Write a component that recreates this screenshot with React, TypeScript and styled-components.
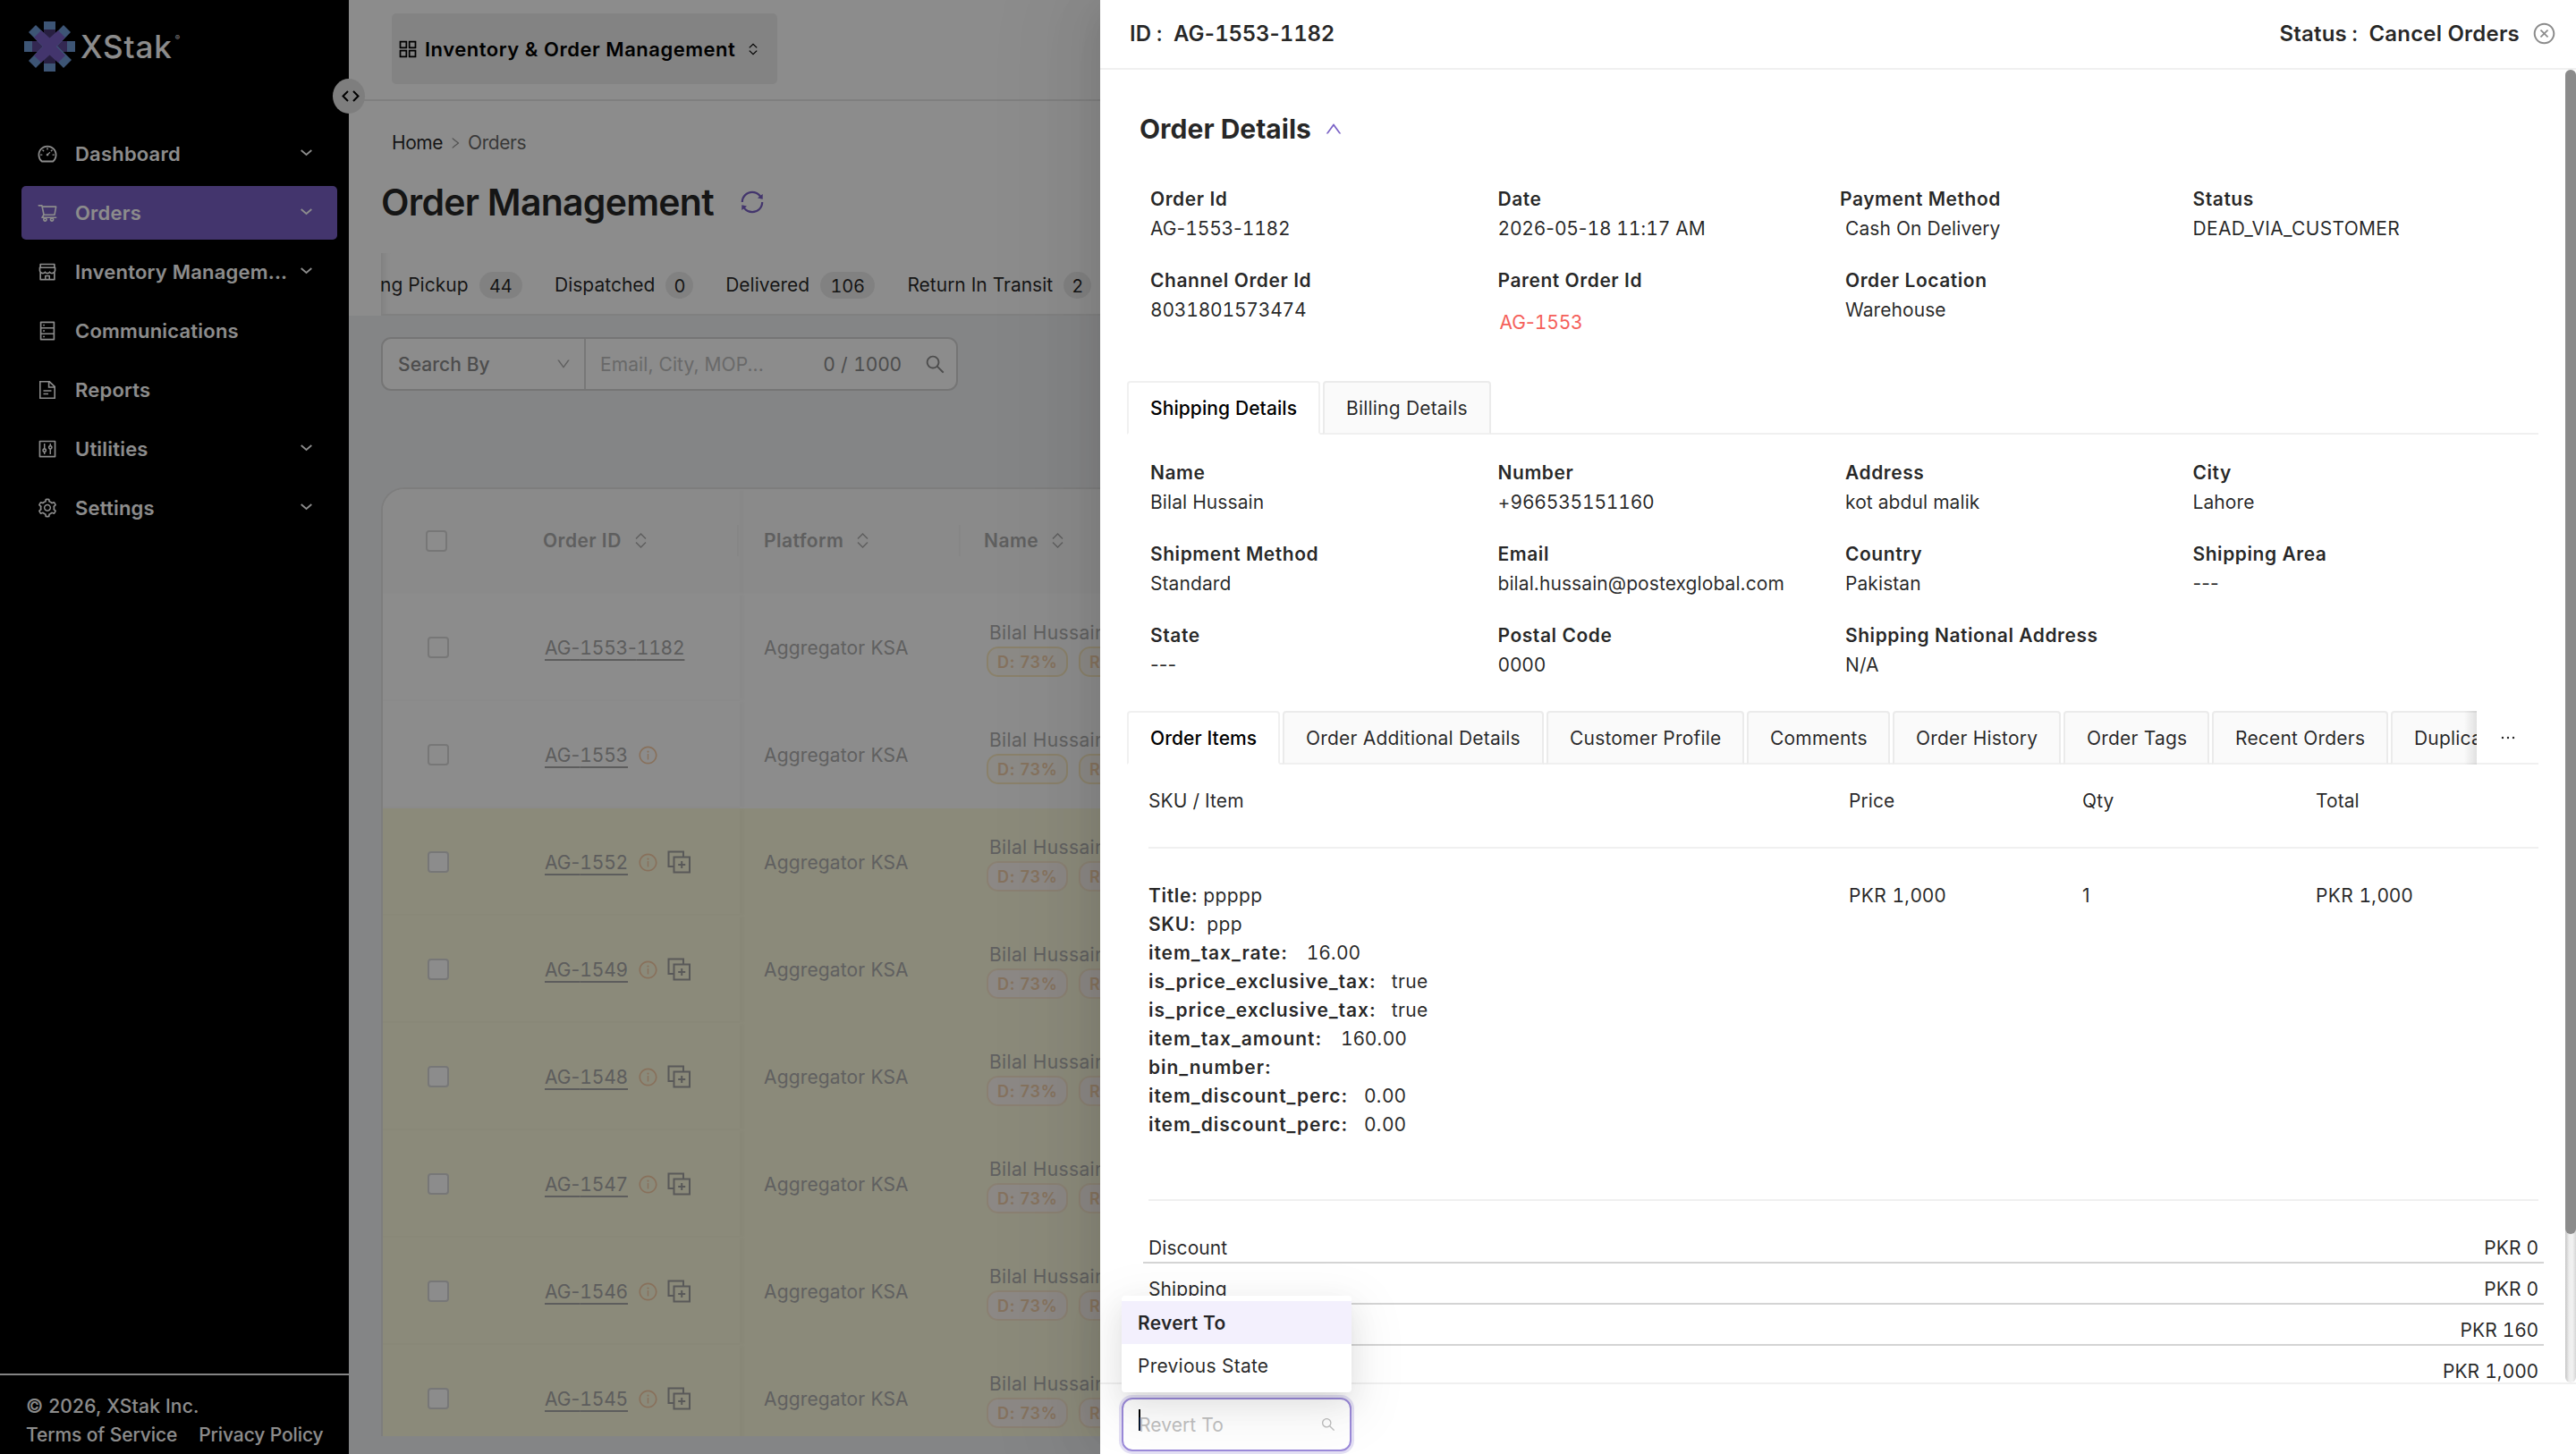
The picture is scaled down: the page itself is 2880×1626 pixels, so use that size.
import * as React from 'react'
import styled, { createGlobalStyle, css } from 'styled-components'
import {
  AiOutlineAppstore,
  AiOutlineCloseCircle,
  AiOutlineControl,
  AiOutlineDashboard,
  AiOutlineDatabase,
  AiOutlineDown,
  AiOutlineEllipsis,
  AiOutlineInfoCircle,
  AiOutlineRight,
  AiOutlineSearch,
  AiOutlineSetting,
  AiOutlineShop,
  AiOutlineShoppingCart,
  AiOutlineSync,
  AiOutlineUp,
} from 'react-icons/ai'

// Config
const colors = {
  primary: '#7a62c6',
  text: 'rgba(0, 0, 0, 0.85)',
  border: '#f0f0f0',
  page: '#f0f2f5',
}

const GlobalStyle = createGlobalStyle`
  * {
    box-sizing: border-box;
  }

  body {
    margin: 0;
    font-family: 'Inter', 'Liberation Sans', sans-serif;
    font-size: 21px;
    letter-spacing: 0.08px;
    color: ${colors.text};
  }

  p, h1, h2 {
    margin: 0;
  }

  svg {
    display: block;
    flex: none;
  }
`

const Page = styled.div`
  position: relative;
  display: grid;
  grid-template-columns: 390px 1fr;
  width: 2880px;
  height: 1626px;
  overflow: hidden;
  background-color: ${colors.page};
`

// Digits share one width, punctuation between them stays proportional
const Digits = styled.span`
  font-variant-numeric: tabular-nums;
  letter-spacing: -0.2px;
`

/* Sidebar */

const Sidebar = styled.aside`
  position: relative;
  display: flex;
  flex-direction: column;
  background-color: #000;
  color: #fff;
`

const Brand = styled.div`
  display: flex;
  gap: 6px;
  height: 142px;
  padding: 24px 0 0 27px;
`

const BrandName = styled.span`
  font-size: 35px;
  font-weight: 500;
  line-height: 56px;
  letter-spacing: 0.9px;
`

const BrandMark = styled.sup`
  margin: 14px 0 0 -3px;
  font-size: 8px;
  line-height: 8px;
`

const Collapse = styled.button`
  position: absolute;
  top: 88px;
  right: -18px;
  z-index: 2;
  display: grid;
  place-items: center;
  width: 36px;
  height: 39px;
  padding: 0 0 0 4px;
  border: 0;
  border-radius: 50%;
  background-color: #e6e6e6;
`

const Nav = styled.nav`
  display: grid;
  gap: 6px;
  padding: 0 13px 0 24px;
`

const NavItem = styled.a<{ $active?: boolean }>`
  display: grid;
  grid-template-columns: 43px 1fr 14px;
  align-items: center;
  height: 60px;
  padding: 0 27px 0 17px;
  border-radius: 5px;
  background-color: ${({ $active }) => ($active ? colors.primary : 'transparent')};
  font-size: 22px;
  font-weight: 600;
  letter-spacing: 0.2px;
  white-space: nowrap;

  svg:last-child {
    margin-top: -2px;
  }
`

const Legal = styled.footer`
  display: grid;
  grid-template-columns: max-content max-content;
  column-gap: 24px;
  align-content: start;
  height: 90px;
  margin-top: auto;
  padding: 19px 29px 0;
  border-top: 2px solid #f0f0f0;
  font-weight: 500;
  letter-spacing: -0.1px;
  line-height: 32px;

  p {
    grid-column: 1 / -1;
    letter-spacing: 0.2px;
  }
`

/* Main */

const Main = styled.main`
  display: flex;
  flex-direction: column;
  min-width: 0;
`

const TopBar = styled.header`
  height: 113px;
  padding: 15px 0 0 48px;
  border-bottom: 2px solid #e8e8e8;
  background-color: #fff;
`

const AppSwitcher = styled.div`
  display: flex;
  align-items: center;
  width: 431px;
  height: 79px;
  padding-left: 5px;
  border-radius: 5px;
  background-color: #efefef;
  color: #000;
  font-size: 22px;
  font-weight: 600;
  letter-spacing: 0.52px;

  span {
    margin: 0 15px 0 6px;
  }
`

const PageHead = styled.div`
  height: 240px;
  padding: 32px 0 0 36px;
  background-color: #fff;
`

const Breadcrumb = styled.div`
  display: flex;
  align-items: center;
  gap: 6px;
  padding-left: 12px;
  letter-spacing: -0.45px;
  line-height: 30px;

  span:last-child {
    color: rgba(0, 0, 0, 0.62);
  }
`

const PageTitle = styled.div`
  display: flex;
  align-items: center;
  gap: 28px;
  height: 60px;
  margin-top: 21px;
  color: ${colors.primary};

  h1 {
    color: ${colors.text};
    font-size: 41px;
    font-weight: 600;
    letter-spacing: -0.75px;
  }
`

const StatusTabs = styled.div`
  display: flex;
  align-items: center;
  gap: 36px;
  height: 70px;
  margin-top: 27px;
  padding-top: 2px;
  border-bottom: 2px solid #e9e9e9;
  box-shadow: inset 12px 0 10px -10px rgba(0, 0, 0, 0.12);
  letter-spacing: 0;
  overflow: hidden;
  white-space: nowrap;
`

const StatusTab = styled.div`
  display: flex;
  align-items: center;
  gap: 12px;

  &:first-child {
    margin-left: -1px;
  }
`

const Count = styled.span<{ $single?: boolean }>`
  height: 30px;
  margin-top: 2px;
  padding: 0 ${({ $single }) => ($single ? 9 : 11.5)}px;
  border-radius: 15px;
  background-color: #ececec;
  font-size: 20px;
  line-height: 32px;
`

const SearchBar = styled.div`
  display: grid;
  grid-template-columns: 225px 1fr;
  width: 645px;
  height: 60px;
  margin: 24px 0 0 36px;
  border: 2px solid #d6d6d6;
  border-radius: 11px;
  background-color: #fff;
  color: #8c8c8c;
`

const SearchField = styled.div`
  display: flex;
  align-items: center;
  justify-content: space-between;
  padding: 0 14px 0 17px;
  font-weight: 500;

  &:last-child {
    padding: 0 11px 0 16px;
    border-left: 2px solid #dadada;
    font-weight: 400;
  }
`

const Placeholder = styled.span`
  flex: 1;
  color: #bfbfbf;
`

const Counter = styled.span`
  margin-right: 25px;
  letter-spacing: 0.4px;
`

const Card = styled.section`
  flex: none;
  height: 1061px;
  margin: 108px 0 0 36px;
  border: 2px solid #e4e4e4;
  border-width: 2px 0 0 2px;
  border-top-left-radius: 26px;
  background-color: #fff;
  overflow: hidden;
`

const rowGrid = css`
  display: grid;
  grid-template-columns: 399px 247px 1fr;
`

const HeadRow = styled.div`
  ${rowGrid}
  height: 117px;
  background-color: #fcfcfc;
  color: #aeaeae;
  font-weight: 600;
  letter-spacing: 0.45px;
`

const Row = styled.div<{ $marked?: boolean }>`
  ${rowGrid}
  height: 120px;
  background-color: ${({ $marked }) => ($marked ? '#fdfbde' : '#fff')};
  color: #b0b0b0;
`

const IdCell = styled.div<{ $head?: boolean }>`
  display: grid;
  grid-template-columns: 131px 1fr;
  align-items: center;
  padding: ${({ $head }) => ($head ? '0 1px 2px 48px' : '2px 1px 0 50px')};
  border-bottom: ${({ $head }) => ($head ? 0 : 2)}px solid rgba(0, 0, 0, 0.012);
  box-shadow: 6px 0 2px -1px rgba(0, 0, 0, 0.018);
`

const Cell = styled.div`
  display: flex;
  align-items: center;
  padding-left: 27px;
  letter-spacing: 0.15px;
`

const HeadCell = styled.div<{ $divider?: boolean }>`
  display: flex;
  align-items: center;
  align-self: center;
  gap: 15px;
  height: 35px;
  margin-bottom: 2px;
  padding-left: ${({ $divider }) => ($divider ? 27 : 26)}px;
  border-right: ${({ $divider }) => ($divider ? 2 : 0)}px solid #f4f4f4;
`

const IdHead = styled(HeadCell)`
  margin-bottom: 0;
  padding-left: 0;
  border-right: 2px solid #f4f4f4;
`

const Checkbox = styled.span`
  width: 24px;
  height: 24px;
  border: 2px solid #d9d9d9;
  border-radius: 4px;
  background-color: #fff;
`

const OrderLink = styled.div`
  display: flex;
  align-items: center;

  svg:nth-of-type(1) {
    margin-left: 11px;
    color: #f7cda6;
  }

  svg:nth-of-type(2) {
    margin-left: 10px;
    color: #a2a2a2;
  }
`

const OrderId = styled.a`
  margin-top: 1px;
  color: #aaa;
  text-decoration: underline;
  text-decoration-thickness: 2px;
  text-underline-offset: 5px;
`

const Customer = styled.div`
  padding: 28px 0 0 32px;
  letter-spacing: 0.35px;
  line-height: 32px;
  white-space: nowrap;
`

const Scores = styled.div`
  display: flex;
  gap: 12px;
  margin: -1px 0 0 -3px;
`

const Score = styled.span<{ $marked?: boolean }>`
  width: 91px;
  height: 34px;
  border: 2px solid ${({ $marked }) => ($marked ? '#fbead0' : '#fcecc4')};
  border-radius: 13px;
  background-color: ${({ $marked }) => ($marked ? '#fff8f2' : '#fffcf4')};
  color: #f2d0ac;
  font-size: 18px;
  font-weight: 600;
  letter-spacing: 0.8px;
  line-height: 31px;
  text-indent: 10px;
`

const Mask = styled.div`
  position: absolute;
  inset: 0;
  z-index: 5;
  background-color: rgba(0, 0, 0, 0.45);
`

/* Drawer */

const Drawer = styled.section`
  position: absolute;
  top: 0;
  right: 0;
  bottom: 0;
  z-index: 10;
  display: grid;
  grid-template-rows: 78px 1468px 80px;
  width: 1650px;
  background-color: #fff;
  box-shadow: -12px 0 32px -16px rgba(0, 0, 0, 0.08), -18px 0 56px 0 rgba(0, 0, 0, 0.05),
    -24px 0 96px 32px rgba(0, 0, 0, 0.03);
`

const DrawerHeader = styled.header`
  display: flex;
  align-items: center;
  justify-content: space-between;
  padding: 0 22px 2px 33px;
  border-bottom: 2px solid ${colors.border};
  font-size: 24px;
  font-weight: 600;
  letter-spacing: 0.2px;
`

const HeaderPair = styled.div`
  display: flex;
  align-items: center;
  white-space: pre;

  i {
    margin: 0 12px 0 5px;
    font-style: normal;
    font-weight: 500;
  }

  svg {
    margin-left: 14px;
    color: #8c8c8c;
  }
`

const DrawerScroll = styled.div`
  display: grid;
  grid-template-columns: 1fr 12px;
  overflow: hidden;
`

const DrawerBody = styled.div`
  height: 1468px;
  padding: 46px 30px 0;
  overflow: hidden;
`

const ScrollTrack = styled.div`
  border-radius: 6px;
  background: linear-gradient(to right, #c6c6c6, #ececec 35%, #f2f2f2 65%, #d6d6d6);
`

const ScrollThumb = styled.div`
  height: 1302px;
  border-radius: 6px;
  background-color: #8b8b8b;
`

const SectionTitle = styled.div`
  display: flex;
  align-items: center;
  gap: 14px;
  height: 40px;
  padding-left: 14px;
  color: ${colors.primary};

  h2 {
    color: ${colors.text};
    font-size: 30px;
    font-weight: 700;
    letter-spacing: 0;
  }
`

const Fields = styled.div<{ $top: number; $height: number }>`
  display: grid;
  grid-template-columns: repeat(4, 388.5px);
  grid-auto-rows: 66px;
  row-gap: 25px;
  height: ${({ $height }) => $height}px;
  padding: ${({ $top }) => $top}px 0 0 26px;
`

const FieldBox = styled.div<{ $outdent?: boolean; $code?: boolean }>`
  letter-spacing: ${({ $code }) => ($code ? 0.3 : 0.08)}px;
  line-height: 33px;
  white-space: nowrap;

  b {
    display: block;
    margin-left: ${({ $outdent }) => ($outdent ? -6 : 0)}px;
    font-weight: 600;
    letter-spacing: 0.55px;
  }
`

const ParentLink = styled.a`
  display: block;
  margin: 14px 0 0 2px;
  color: #f5605a;
`

const TabBar = styled.div`
  display: grid;
  grid-template-columns: 1fr auto;
  width: 1578px;
  height: 60px;
  border-bottom: 2px solid ${colors.border};
`

const TabList = styled.div<{ $clipped?: boolean }>`
  position: relative;
  display: flex;
  gap: 3px;
  height: 60px;
  overflow: ${({ $clipped }) => ($clipped ? 'hidden' : 'visible')};

  &::after {
    content: '';
    display: ${({ $clipped }) => ($clipped ? 'block' : 'none')};
    position: absolute;
    top: 0;
    right: 0;
    width: 14px;
    height: 100%;
    background: linear-gradient(to right, rgba(0, 0, 0, 0), rgba(0, 0, 0, 0.1));
  }
`

const Tab = styled.div<{ $active?: boolean; $width: number }>`
  flex: none;
  width: ${({ $width }) => $width}px;
  height: 60px;
  border: 2px solid ${({ $active }) => ($active ? colors.border : '#ebebeb')};
  border-bottom-color: ${({ $active }) => ($active ? '#fff' : colors.border)};
  border-radius: 4px 4px 0 0;
  background-color: ${({ $active }) => ($active ? '#fff' : '#fafafa')};
  color: ${({ $active }) => ($active ? '#000' : colors.text)};
  font-weight: ${({ $active }) => ($active ? 500 : 400)};
  letter-spacing: ${({ $active }) => ($active ? 0.1 : 0.2)}px;
  line-height: 57px;
  text-indent: 24px;
  white-space: nowrap;
`

const MoreTabs = styled.div`
  display: grid;
  place-items: center;
  width: 69px;
`

const ItemsRow = styled.div<{ $head?: boolean }>`
  display: grid;
  grid-template-columns: 783px 261px 261px 1fr;
  height: ${({ $head }) => ($head ? 94 : 394)}px;
  width: 1554px;
  margin-left: 24px;
  padding-top: ${({ $head }) => ($head ? 25 : 37)}px;
  border-bottom: 2px solid ${colors.border};
  letter-spacing: ${({ $head }) => ($head ? 0.08 : 0.4)}px;
  line-height: 32px;
`

const Attribute = styled.p<{ $gap: number; $raw?: boolean }>`
  b {
    margin-right: ${({ $gap }) => $gap}px;
    font-weight: 600;
    letter-spacing: ${({ $raw }) => ($raw ? 0.95 : 0.65)}px;
  }
`

const Totals = styled.div`
  width: 1566px;
  margin: 24px 0 0 18px;
`

const TotalRow = styled.div`
  display: flex;
  justify-content: space-between;
  height: 46px;
  padding: 13px 6px 0;
  border-bottom: 2px solid #d4d4d4;
  line-height: 32px;

  span:last-child {
    margin-left: auto;
  }
`

const DrawerFooter = styled.footer`
  position: relative;
  padding: 15px 24px 0;
  border-top: 2px solid ${colors.border};
`

const Select = styled.div`
  display: flex;
  align-items: center;
  width: 257px;
  height: 60px;
  padding: 0 15px 0 17px;
  border: 2px solid #9b8ad9;
  border-radius: 12px;
  box-shadow: 0 0 0 3px rgba(122, 98, 198, 0.2);
  color: #bfbfbf;

  span {
    flex: 1;
    padding-top: 1px;
  }
`

const TextCursor = styled.i`
  width: 2px;
  height: 24px;
  margin: -11px -2px 0 0;
  background-color: #000;
`

const Dropdown = styled.div`
  position: absolute;
  bottom: 69px;
  left: 24px;
  width: 257px;
  height: 108px;
  padding: 6px 0;
  border-radius: 4px;
  background-color: #fff;
  box-shadow: 0 6px 12px -8px rgba(0, 0, 0, 0.12), 0 12px 32px 0 rgba(0, 0, 0, 0.08),
    0 18px 56px 16px rgba(0, 0, 0, 0.05);
`

const Option = styled.div<{ $selected?: boolean }>`
  height: 48px;
  padding-left: 18px;
  background-color: ${({ $selected }) => ($selected ? '#f3f0fd' : '#fff')};
  font-weight: ${({ $selected }) => ($selected ? 600 : 400)};
  letter-spacing: 0.25px;
  line-height: 49px;
`

/* Icons */

const Logo = () => (
  <svg width="57" height="56" viewBox="0 0 57 56">
    <path d="M22 0h13v56H22z" fill="#4a3a77" />
    <path d="M0 22h57v12H0z" fill="#5d4a96" />
    <path d="M22 0h13v9H22zM22 47h13v9H22zM0 22h9v12H0zM48 22h9v12h-9z" fill="#6f9cd6" />
    <path d="M5 12 13 4 53 43 44 52zM44 4l8 8L13 52l-8-8z" fill="#6f9cd6" />
    <path d="m11 18 8-8 9.500 8.500L38 10l8 8-10 10 10 10-8 8-9.500-8.500L19 46l-8-8 10-10z" fill="#7a62c6" />
  </svg>
)

const CollapseIcon = () => (
  <svg width="20" height="13" viewBox="0 0 20 13" fill="none" stroke="#000" strokeWidth="2">
    <path d="M7 1 1.500 6.500 7 12M13 1l5.500 5.500L13 12" />
  </svg>
)

const Chevron = () => (
  <svg width="13" height="8" viewBox="0 0 13 8" fill="none" stroke="currentColor" strokeWidth="1.800">
    <path d="m.7 1 5.800 5L12.300 1" />
  </svg>
)

const ReportIcon = () => (
  <svg width="24" height="24" viewBox="0 0 24 24" fill="none" stroke="currentColor" strokeWidth="1.600">
    <path d="M3.800 2.800h10.500l5.900 5.500v13H3.800zM13.600 3v6h6M7.500 13h9M7.500 16.500h5.500" />
  </svg>
)

const Sorter = ({ width = 13, height = 17 }: { width?: number; height?: number }) => (
  <svg width={width} height={height} viewBox="0 0 13 17" fill="none" stroke="currentColor" strokeWidth="1.500">
    <path d="m1 6.500 5.500-5.500L12 6.500M1 10.500 6.500 16 12 10.500" />
  </svg>
)

const CopyPlusIcon = () => (
  <svg width="26" height="26" viewBox="0 0 26 26" fill="none" stroke="currentColor" strokeWidth="2">
    <path d="M7 18H1.500V1.500H18V7M7.500 7.500H25v17H7.500zM16.200 12v8M12.200 16h8" />
  </svg>
)

const navItems = [
  { label: 'Dashboard', icon: AiOutlineDashboard, open: true },
  { label: 'Orders', icon: AiOutlineShoppingCart, open: true, active: true },
  { label: 'Inventory Managem...', icon: AiOutlineShop, open: true },
  { label: 'Communications', icon: AiOutlineDatabase },
  { label: 'Reports', icon: ReportIcon },
  { label: 'Utilities', icon: AiOutlineControl, open: true },
  { label: 'Settings', icon: AiOutlineSetting, open: true },
]

const statusTabs = [
  ['ng Pickup', '44'],
  ['Dispatched', '0'],
  ['Delivered', '106'],
  ['Return In Transit', '2'],
]

const orders = [
  { id: 'AG-1553-1182' },
  { id: 'AG-1553', info: true },
  { id: 'AG-1552', info: true, marked: true },
  { id: 'AG-1549', info: true, marked: true },
  { id: 'AG-1548', info: true, marked: true },
  { id: 'AG-1547', info: true, marked: true },
  { id: 'AG-1546', info: true, marked: true },
  { id: 'AG-1545', info: true, marked: true },
]

const shipping = [
  ['Name', 'Bilal Hussain'],
  ['Number', '+966535151160'],
  ['Address', 'kot abdul malik'],
  ['City', 'Lahore'],
  ['Shipment Method', 'Standard'],
  ['Email', 'bilal.hussain@postexglobal.com'],
  ['Country', 'Pakistan'],
  ['Shipping Area', '---'],
  ['State', '---'],
  ['Postal Code', '0000'],
  ['Shipping National Address', 'N/A'],
]

const itemTabs: [string, number][] = [
  ['Order Items', 171],
  ['Order Additional Details', 292],
  ['Customer Profile', 221],
  ['Comments', 160],
  ['Order History', 188],
  ['Order Tags', 163],
  ['Recent Orders', 197],
  ['Duplicate Orders', 220],
]

const attributes: [string, string, number][] = [
  ['Title:', 'ppppp', 6],
  ['SKU:', 'ppp', 12],
  ['item_tax_rate:', '16.00', 21],
  ['is_price_exclusive_tax:', 'true', 17],
  ['is_price_exclusive_tax:', 'true', 17],
  ['item_tax_amount:', '160.00', 21],
  ['bin_number:', '', 0],
  ['item_discount_perc:', '0.00', 18],
  ['item_discount_perc:', '0.00', 18],
]

const totals = [
  ['Discount', 'PKR 0'],
  ['Shipping', 'PKR 0'],
  ['', 'PKR 160'],
  ['', 'PKR 1,000'],
]

const Tabular = ({ text }: { text: string }) => (
  <>
    {text.split(/(\d+)/).map((part, i) => (i % 2 ? <Digits key={i}>{part}</Digits> : part))}
  </>
)

type FieldProps = {
  label: string
  value?: string
  outdent?: boolean
  code?: boolean
  children?: React.ReactNode
}

const Field = ({ label, value = '', outdent, code, children }: FieldProps) => (
  <FieldBox $outdent={outdent} $code={code}>
    <b>{label}</b>
    <Tabular text={value} />
    {children}
  </FieldBox>
)

const SideMenu = () => (
  <Sidebar>
    <Brand>
      <Logo />
      <BrandName>XStak</BrandName>
      <BrandMark>®</BrandMark>
    </Brand>
    <Collapse>
      <CollapseIcon />
    </Collapse>
    <Nav>
      {navItems.map(({ label, icon: Icon, open, active }) => (
        <NavItem key={label} $active={active}>
          <Icon size={24} />
          <span>{label}</span>
          {open && <Chevron />}
        </NavItem>
      ))}
    </Nav>
    <Legal>
      <p>© 2026, XStak Inc.</p>
      <span>Terms of Service</span>
      <span>Privacy Policy</span>
    </Legal>
  </Sidebar>
)

const OrdersTable = () => (
  <Card>
    <HeadRow>
      <IdCell $head>
        <Checkbox />
        <IdHead>
          Order ID <Sorter />
        </IdHead>
      </IdCell>
      <HeadCell $divider>
        Platform <Sorter />
      </HeadCell>
      <HeadCell>
        Name <Sorter />
      </HeadCell>
    </HeadRow>
    {orders.map(({ id, info, marked }) => (
      <Row key={id} $marked={marked}>
        <IdCell>
          <Checkbox />
          <OrderLink>
            <OrderId>
              <Tabular text={id} />
            </OrderId>
            {info && <AiOutlineInfoCircle size={23} />}
            {marked && <CopyPlusIcon />}
          </OrderLink>
        </IdCell>
        <Cell>Aggregator KSA</Cell>
        <Customer>
          Bilal Hussain
          <Scores>
            <Score $marked={marked}>D: 73%</Score>
            <Score $marked={marked}>R: 27%</Score>
          </Scores>
        </Customer>
      </Row>
    ))}
  </Card>
)

const OrderDrawer = () => (
  <Drawer>
    <DrawerHeader>
      <HeaderPair>
        ID<i>:</i>
        <span>
          <Tabular text="AG-1553-1182" />
        </span>
      </HeaderPair>
      <HeaderPair>
        Status<i>:</i>Cancel Orders
        <AiOutlineCloseCircle size={27} />
      </HeaderPair>
    </DrawerHeader>
    <DrawerScroll>
      <DrawerBody>
        <SectionTitle>
          <h2>Order Details</h2>
          <AiOutlineUp size={22} />
        </SectionTitle>
        <Fields $top={42} $height={262}>
          <Field label="Order Id" value="AG-1553-1182" />
          <Field label="Date" value="2026-05-18 11:17 AM" />
          <Field label="Payment Method" value="Cash On Delivery" outdent />
          <Field label="Status" value="DEAD_VIA_CUSTOMER" code />
          <Field label="Channel Order Id" value="8031801573474" />
          <Field label="Parent Order Id">
            <ParentLink>
              <Tabular text="AG-1553" />
            </ParentLink>
          </Field>
          <Field label="Order Location" value="Warehouse" />
        </Fields>

        <TabBar>
          <TabList>
            <Tab $active $width={216}>Shipping Details</Tab>
            <Tab $width={188}>Billing Details</Tab>
          </TabList>
        </TabBar>
        <Fields $top={26} $height={309}>
          {shipping.map(([label, value]) => (
            <Field key={label} label={label} value={value} />
          ))}
        </Fields>

        <TabBar>
          <TabList $clipped>
            {itemTabs.map(([label, width], i) => (
              <Tab key={label} $active={i === 0} $width={width}>{label}</Tab>
            ))}
          </TabList>
          <MoreTabs>
            <AiOutlineEllipsis size={22} />
          </MoreTabs>
        </TabBar>
        <ItemsRow $head>
          <span>SKU / Item</span>
          <span>Price</span>
          <span>Qty</span>
          <span>Total</span>
        </ItemsRow>
        <ItemsRow>
          <div>
            {attributes.map(([name, value, gap], i) => (
              <Attribute key={i} $gap={gap} $raw={name.includes('_')}>
                <b>{name}</b>
                <Tabular text={value} />
              </Attribute>
            ))}
          </div>
          <span><Tabular text="PKR 1,000" /></span>
          <span>1</span>
          <span><Tabular text="PKR 1,000" /></span>
        </ItemsRow>
        <Totals>
          {totals.map(([label, value], i) => (
            <TotalRow key={i}>
              {label && <span>{label}</span>}
              <span><Tabular text={value} /></span>
            </TotalRow>
          ))}
        </Totals>
      </DrawerBody>
      <ScrollTrack>
        <ScrollThumb />
      </ScrollTrack>
    </DrawerScroll>
    <DrawerFooter>
      <Select>
        <TextCursor />
        <span>Revert To</span>
        <AiOutlineSearch size={18} />
      </Select>
      <Dropdown>
        <Option $selected>Revert To</Option>
        <Option>Previous State</Option>
      </Dropdown>
    </DrawerFooter>
  </Drawer>
)

const App: React.FC = () => {
  return (
    <Page>
      <GlobalStyle />
      <SideMenu />
      <Main>
        <TopBar>
          <AppSwitcher>
            <AiOutlineAppstore size={26} />
            <span>Inventory &amp; Order Management</span>
            <Sorter width={10} height={14} />
          </AppSwitcher>
        </TopBar>
        <PageHead>
          <Breadcrumb>
            <span>Home</span>
            <AiOutlineRight size={16} color="#999" />
            <span>Orders</span>
          </Breadcrumb>
          <PageTitle>
            <h1>Order Management</h1>
            <AiOutlineSync size={30} />
          </PageTitle>
          <StatusTabs>
            {statusTabs.map(([label, count]) => (
              <StatusTab key={label}>
                {label}
                <Count $single={count.length === 1}>
                  <Tabular text={count} />
                </Count>
              </StatusTab>
            ))}
          </StatusTabs>
        </PageHead>
        <SearchBar>
          <SearchField>
            Search By
            <AiOutlineDown size={18} color="#b0b0b0" />
          </SearchField>
          <SearchField>
            <Placeholder>Email, City, MOP...</Placeholder>
            <Counter>
              <Tabular text="0 / 1000" />
            </Counter>
            <AiOutlineSearch size={25} />
          </SearchField>
        </SearchBar>
        <OrdersTable />
      </Main>
      <Mask />
      <OrderDrawer />
    </Page>
  )
}

export default App
